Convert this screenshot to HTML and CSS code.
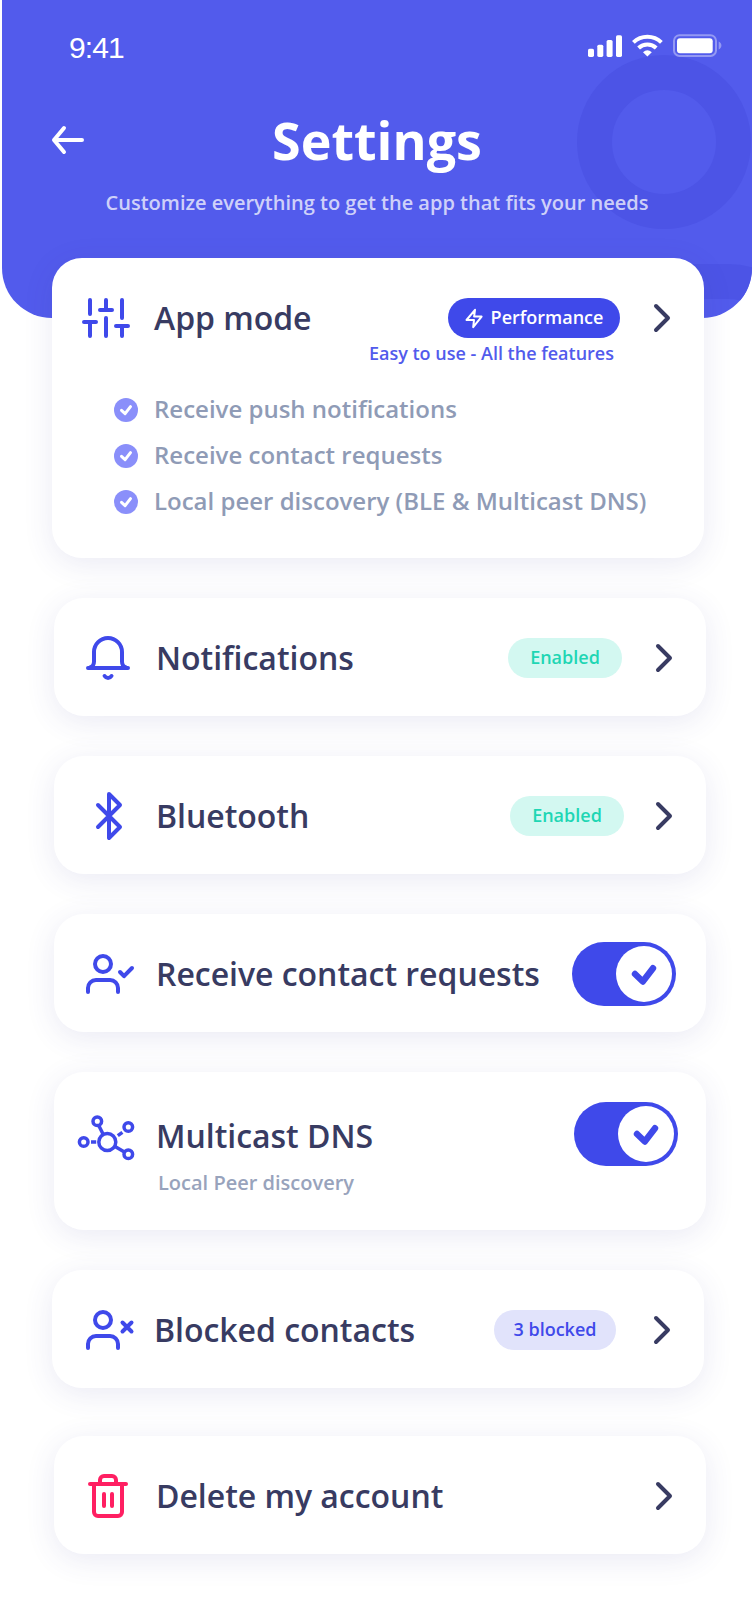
FILE: index.html
```html
<!DOCTYPE html>
<html lang="en">
<head>
<meta charset="utf-8">
<title>Settings</title>
<link rel="stylesheet" href="styles.css">
</head>
<body>
<main class="screen">
  <header class="header">
    <svg class="decor" viewBox="0 0 750 318">
      <circle cx="662" cy="142" r="69.5"/>
      <path d="M600 281.5H726a69.5 69.5 0 0 1 69.5 69.5"/>
    </svg>
    <div class="status">
      <span class="time">9:41</span>
      <svg class="status-icons" width="136" height="26" viewBox="0 0 136 26">
        <g fill="#fff">
          <rect x="1" y="15.7" width="6" height="8.2" rx="1.6"/>
          <rect x="10.3" y="11.7" width="6" height="12.2" rx="1.6"/>
          <rect x="19.6" y="7" width="6" height="16.9" rx="1.6"/>
          <rect x="29" y="2.3" width="6" height="21.6" rx="1.6"/>
          <path d="M60.4 23.5l-4.4-4.3q4.4-3.7 8.8 0z"/>
          <rect x="90" y="5.3" width="35.7" height="15" rx="3"/>
        </g>
        <g fill="none" stroke="#fff" stroke-width="4">
          <path d="M46.4 9.4a20.2 20.2 0 0 1 28 0"/>
          <path d="M51.6 15a12.8 12.8 0 0 1 17.6 0"/>
        </g>
        <g opacity=".38">
          <rect x="87" y="2.3" width="42" height="20.6" rx="5.5" fill="none" stroke="#fff" stroke-width="2"/>
          <path d="M131.7 8.6c3.6 1.6 3.6 6.2 0 7.8z" fill="#fff"/>
        </g>
      </svg>
    </div>
    <div class="title-row">
      <svg class="back" width="32" height="32" viewBox="0 0 32 32"><path d="M30 16H2M12 4L2 16l10 12"/></svg>
      <h1>Settings</h1>
    </div>
    <p class="subtitle">Customize everything to get the app that fits your needs</p>
  </header>

  <section class="list">
    <article class="card card-mode shift">
      <div class="row">
        <svg class="icon" width="64" height="56" viewBox="0 0 64 56"><path d="M22 10v14M22 34v12M16 32h12M38 10v10M32 20h12M38 28v18M54 10v18M48 36h12M54 36v10"/></svg>
        <h2>App mode</h2>
        <span class="badge performance"><svg width="18" height="21" viewBox="0 0 18 21"><path d="M10 1.8L1.5 12H9l-.8 7.2L16.6 8.6H9.1z"/></svg>Performance</span>
        <svg class="chevron" width="16" height="28" viewBox="0 0 16 28"><path d="M2 2l12 12L2 26"/></svg>
      </div>
      <p class="mode-note">Easy to use - All the features</p>
      <ul class="features">
        <li><svg width="24" height="24" viewBox="0 0 24 24"><circle cx="12" cy="12" r="12"/><path d="M7.5 12.3l3.6 3.4 5.4-7"/></svg><span>Receive push notifications</span></li>
        <li><svg width="24" height="24" viewBox="0 0 24 24"><circle cx="12" cy="12" r="12"/><path d="M7.5 12.3l3.6 3.4 5.4-7"/></svg><span>Receive contact requests</span></li>
        <li><svg width="24" height="24" viewBox="0 0 24 24"><circle cx="12" cy="12" r="12"/><path d="M7.5 12.3l3.6 3.4 5.4-7"/></svg><span>Local peer discovery (BLE &amp; Multicast DNS)</span></li>
      </ul>
    </article>

    <article class="card row">
      <svg class="icon" width="64" height="56" viewBox="0 0 64 56"><path d="M18 39h40M20 38.500c3-1 4-3 4-6V23a14 14 0 0 1 28 0v9.500c0 3 1 5 4 6M34.600 47c1.800 2.700 5.100 2.700 6.900 0"/></svg>
      <h2>Notifications</h2>
      <span class="badge enabled">Enabled</span>
      <svg class="chevron" width="16" height="28" viewBox="0 0 16 28"><path d="M2 2l12 12L2 26"/></svg>
    </article>

    <article class="card row">
      <svg class="icon" width="64" height="56" viewBox="0 0 64 56"><path d="M28 18l22 22-11 11V7l11 11-22 22"/></svg>
      <h2>Bluetooth</h2>
      <span class="badge enabled near">Enabled</span>
      <svg class="chevron" width="16" height="28" viewBox="0 0 16 28"><path d="M2 2l12 12L2 26"/></svg>
    </article>

    <article class="card row">
      <svg class="icon" width="64" height="56" viewBox="0 0 64 56"><circle cx="33" cy="19" r="8"/><path d="M18 47v-4a8 8 0 0 1 8-8h14a8 8 0 0 1 8 8v4M50 27l4 4.200 8-8.200"/></svg>
      <h2>Receive contact requests</h2>
      <span class="toggle"><span class="knob"><svg width="24" height="20" viewBox="0 0 24 20"><path d="M3 9l7.800 7.500L21 3.200"/></svg></span></span>
    </article>

    <article class="card card-dns">
      <div class="row">
        <svg class="icon thin" width="64" height="56" viewBox="0 0 64 56"><circle cx="37.300" cy="33" r="8.500"/><circle cx="13.700" cy="33" r="4.300"/><circle cx="27.300" cy="12.300" r="4.300"/><circle cx="58.300" cy="18" r="4.300"/><circle cx="58.300" cy="45.300" r="4.300"/><path d="M21 33h5.200M29 17l4 8M47.800 26.700l4.600-3.300M45 37.500l9 5.300"/></svg>
        <h2>Multicast DNS</h2>
        <span class="toggle"><span class="knob"><svg width="24" height="20" viewBox="0 0 24 20"><path d="M3 9l7.800 7.500L21 3.200"/></svg></span></span>
      </div>
      <p class="dns-note">Local Peer discovery</p>
    </article>

    <article class="card row shift">
      <svg class="icon" width="64" height="56" viewBox="0 0 64 56"><circle cx="35" cy="19" r="8"/><path d="M20 47v-4a8 8 0 0 1 8-8h14a8 8 0 0 1 8 8v4M54.500 21.500l9 9M63.500 21.500l-9 9"/></svg>
      <h2>Blocked contacts</h2>
      <span class="badge blocked">3 blocked</span>
      <svg class="chevron" width="16" height="28" viewBox="0 0 16 28"><path d="M2 2l12 12L2 26"/></svg>
    </article>

    <article class="card row last">
      <svg class="icon danger" width="64" height="56" viewBox="0 0 64 56"><path d="M20 17h36M30 17v-4a4 4 0 0 1 4-4h8a4 4 0 0 1 4 4v4M24 17v28a4 4 0 0 0 4 4h20a4 4 0 0 0 4-4V17M34 27v12M42 27v12"/></svg>
      <h2>Delete my account</h2>
      <svg class="chevron" width="16" height="28" viewBox="0 0 16 28"><path d="M2 2l12 12L2 26"/></svg>
    </article>
  </section>
</main>
</body>
</html>
```

FILE: styles.css
```css
* { box-sizing: border-box; margin: 0; padding: 0; }
body { background: #fff; font-family: "Open Sans", sans-serif; font-weight: 600; }
svg { display: block; flex: none; overflow: visible; }

.screen { width: 752px; height: 1624px; padding-left: 2px; overflow: hidden; }

.header {
  position: relative;
  height: 318px;
  background: #525bec;
  border-radius: 0 0 50px 50px;
  overflow: hidden;
  color: #fff;
}
.decor { position: absolute; inset: 0; width: 750px; height: 318px; fill: none; stroke: #4c54e6; stroke-width: 35; }
.status { position: relative; display: flex; justify-content: space-between; padding: 33px 29px 0 67px; height: 100px; }
.time { font: 400 30px/30px "Liberation Sans", sans-serif; letter-spacing: -.9px; }
.title-row { position: relative; display: grid; grid-template-columns: 50px 1fr 50px; align-items: center; height: 80px; }
.back { margin-left: 50px; fill: none; stroke: #fff; stroke-width: 4; stroke-linecap: round; stroke-linejoin: round; }
h1 { text-align: center; font-size: 52px; line-height: 80px; font-weight: 700; }
.subtitle { position: relative; text-align: center; font-size: 20px; line-height: 30px; margin-top: 8px; color: rgba(255, 255, 255, .74); }

.list { position: relative; display: flex; flex-direction: column; gap: 40px; margin-top: -60px; padding-left: 52px; }
.card {
  width: 652px;
  height: 118px;
  background: #fff;
  border-radius: 30px;
  box-shadow: 0 6px 30px rgba(64, 64, 152, .11);
}
.row { display: flex; align-items: center; padding: 2px 34px 0 16px; }
.shift { margin-left: -2px; }
.last { margin-top: 8px; }
h2 { flex: 1; margin-left: 22px; font-size: 32px; line-height: 44px; font-weight: 600; letter-spacing: -.03px; color: #383b62; white-space: nowrap; }

.icon { margin-top: -2px; fill: none; stroke: #3f49ea; stroke-width: 4; stroke-linecap: round; stroke-linejoin: round; }
.thin { stroke-width: 3.5; stroke-linecap: butt; }
.danger { stroke: #ff1f62; }
.chevron { fill: none; stroke: #383b62; stroke-width: 4; stroke-linecap: round; stroke-linejoin: round; }

.badge { display: flex; align-items: center; justify-content: center; height: 40px; padding-bottom: 2px; border-radius: 20px; font-size: 18px; margin-right: 34px; white-space: nowrap; }
.performance { width: 172px; gap: 8px; background: #3f49ea; color: #fff; }
.performance svg { margin-top: 2px; fill: none; stroke: #fff; stroke-width: 2; stroke-linejoin: round; }
.enabled { width: 114px; background: #d3f8f1; color: #1fd6b4; }
.near { margin-right: 32px; }
.blocked { width: 122px; margin-right: 38px; background: #e1e3fb; color: #3f49ea; }

.card-mode { height: 300px; padding-top: 32px; }
.card-mode .row { height: 56px; padding-top: 0; }
.card-mode .icon { margin-top: 0; }
.mode-note { margin-top: -6px; padding-right: 90px; text-align: right; font-size: 18px; line-height: 26px; color: #525bec; }
.features { list-style: none; margin-top: 21px; padding-left: 62px; }
.features li { display: flex; align-items: center; gap: 16px; height: 46px; font-size: 24px; color: #8f9bb6; white-space: nowrap; }
.features span { padding-bottom: 3px; }
.features circle { fill: #8a8ffa; }
.features path { fill: none; stroke: #fff; stroke-width: 3; stroke-linecap: round; stroke-linejoin: round; }

.card-dns { height: 158px; padding-top: 30px; }
.card-dns .row { height: 64px; padding: 0 28px 0 16px; }
.card-dns .icon { margin-top: 6px; }
.card-dns h2 { padding-top: 3px; }
.dns-note { margin-top: 2px; padding-left: 104px; font-size: 20px; line-height: 30px; color: #98a3bc; }

.toggle { display: flex; justify-content: flex-end; align-items: center; width: 104px; height: 64px; padding: 4px; border-radius: 32px; background: #3f49ea; }
.card.row > .toggle { margin-right: -4px; }
.knob { display: flex; align-items: center; justify-content: center; width: 56px; height: 56px; border-radius: 50%; background: #fff; }
.knob svg { margin-top: 2px; fill: none; stroke: #3f49ea; stroke-width: 6.4; stroke-linecap: round; stroke-linejoin: round; }
```
